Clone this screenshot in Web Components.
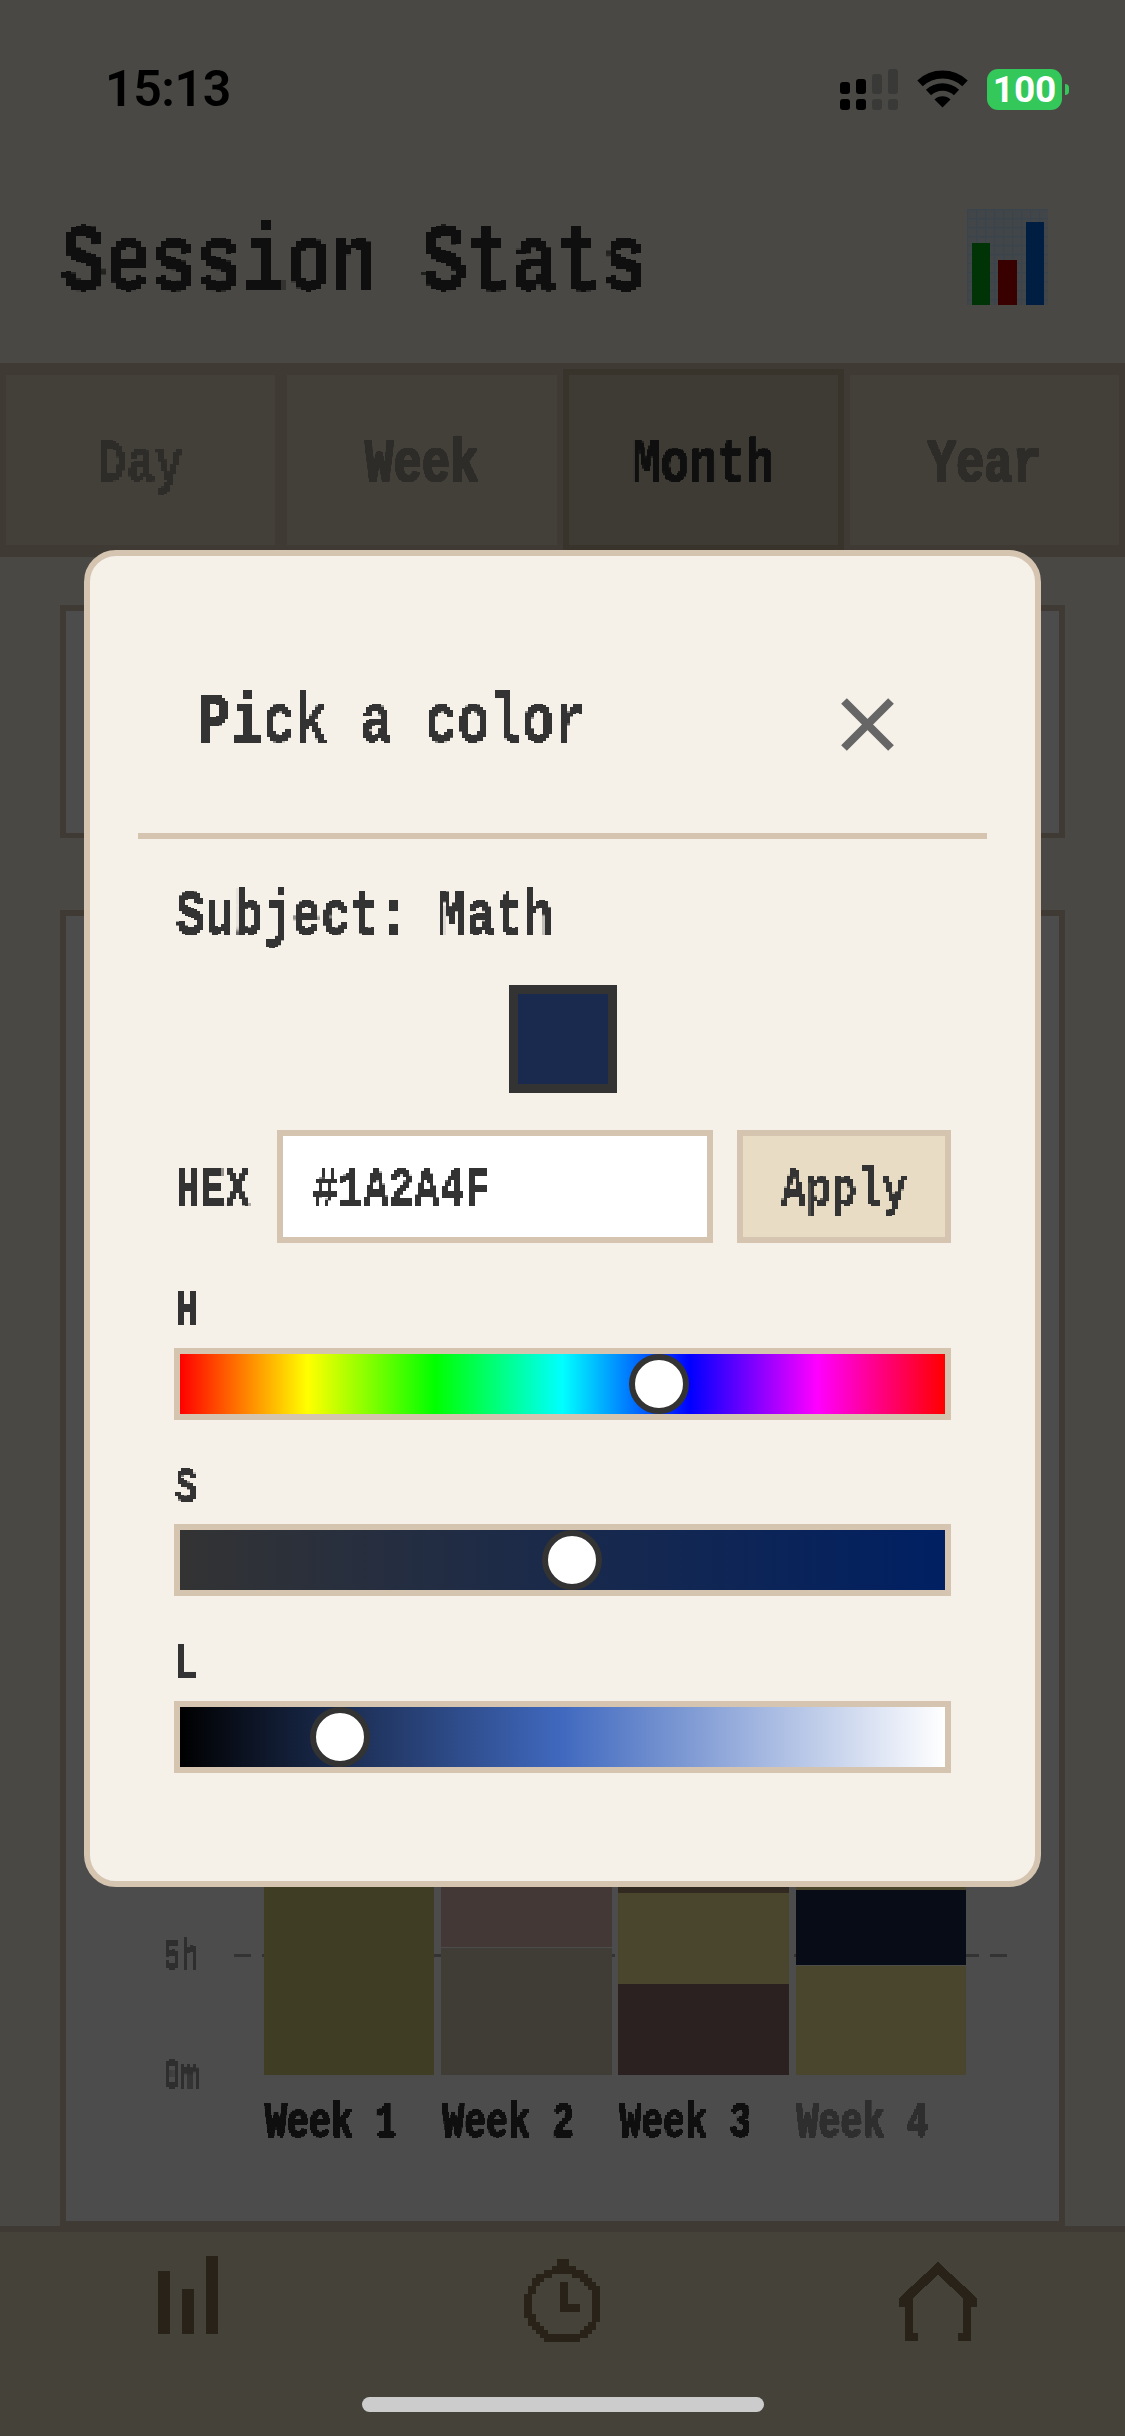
<!DOCTYPE html>
<html lang="en">
<head>
<meta charset="utf-8">
<title>Session Stats</title>
<style>
html,body{margin:0;padding:0;width:1125px;height:2436px;overflow:hidden;background:#F5F0E8}
</style>
</head>
<body>
<app-root>
  <status-bar slot="status"></status-bar>
  <app-header slot="main"><pixel-text adv="45.1" cap="64" style="color:#333">Session Stats</pixel-text></app-header>
  <period-tabs slot="main">
    <tab-item>Day</tab-item><tab-item>Week</tab-item><tab-item active>Month</tab-item><tab-item>Year</tab-item>
  </period-tabs>
  <stats-main slot="main">
    <stat-card style="height:233px"></stat-card>
    <stat-card style="flex:1">
      <stack-chart>
        <chart-bar label="Week 1" segs="230:#D2CB78"></chart-bar>
        <chart-bar label="Week 2" segs="127:#D5C8B4,1:transparent,70:#DFBBB1"></chart-bar>
        <chart-bar label="Week 3" segs="91:#8F716B,91:#F7E696,30:#A78C71"></chart-bar>
        <chart-bar label="Week 4" muted segs="109:#F7E696,1:transparent,75:#1A2A4F,30:#F7E696"></chart-bar>
      </stack-chart>
    </stat-card>
  </stats-main>
  <bottom-nav slot="main"></bottom-nav>
  <color-modal slot="overlay">
    <hsl-slider name="H" pos="449" track="linear-gradient(90deg,#f00,#ff0,#0f0,#0ff,#00f,#f0f,#f00)"></hsl-slider>
    <hsl-slider name="S" pos="362" track="linear-gradient(90deg,#333,#002063)"></hsl-slider>
    <hsl-slider name="L" pos="130" track="linear-gradient(90deg,#000,#4069bf 50%,#fff)"></hsl-slider>
  </color-modal>
  <home-indicator slot="status"></home-indicator>
</app-root>
<script>
function def(name, css, html, setup){
  customElements.define(name, class extends HTMLElement{
    constructor(){
      super();
      const r=this.attachShadow({mode:'open'});
      r.innerHTML='<style>'+css+'</style>'+html;
    }
    connectedCallback(){ if(setup) setup(this,this.shadowRoot); }
  });
}
const MONO='"Liberation Mono","DejaVu Sans Mono",monospace';
const odd=(v)=>{let n=Math.round(v);if(n%2===0)n=(v>=n)?n+1:n-1;return Math.max(n,3);};

def('pixel-text',
 `:host{display:inline-block;font-family:${MONO};font-weight:700;white-space:pre;flex:none;transform-origin:0 50%}
  #w{display:block;height:100%}
  svg{position:absolute;width:0;height:0}`,
 `<svg aria-hidden="true"><filter id="px" x="-20%" y="-60%" width="140%" height="220%" color-interpolation-filters="sRGB"><feFlood id="dot" x="0" y="0" width="1" height="1" flood-color="#000"/><feComposite id="cellbox" x="0" y="0" width="3" height="3" operator="over" in2="SourceAlpha"/><feTile result="grid"/><feComposite in="SourceGraphic" in2="grid" operator="in"/><feComponentTransfer><feFuncA type="linear" slope="4" intercept="-2"/></feComponentTransfer><feMorphology id="grow" operator="dilate" radius="1 1"/></filter></svg><span id="w"><slot></slot></span>`,
 (h,r)=>{
   const adv=+h.getAttribute('adv'),cap=+h.getAttribute('cap');
   const f=adv/0.6,k=cap/(0.66*f);
   h.style.fontSize=f+'px';
   h.style.height=cap+'px';
   h.style.lineHeight=cap+'px';
   h.style.transform=`scaleY(${k}) translateY(${0.0635*f}px)`;
   const cw=odd(cap/14),ch=odd(cap/14/k);
   const c=r.querySelector('#cellbox');
   c.setAttribute('width',cw);c.setAttribute('height',ch);
   const d=r.querySelector('#dot');
   d.setAttribute('x',(cw-1)/2);d.setAttribute('y',(ch-1)/2);
   r.querySelector('#grow').setAttribute('radius',((cw-1)/2)+' '+((ch-1)/2));
   r.querySelector('#w').style.filter='url(#px)';
 });

def('app-root',
 `:host{display:block;position:relative;width:1125px;height:2436px;overflow:hidden;background:#F5F0E8}
  .col{display:flex;flex-direction:column;height:100%}
  .status{position:absolute;inset:0 0 auto 0;z-index:3;height:0}
  .scrim{position:absolute;inset:0;z-index:2;background:rgba(0,0,0,.7);display:flex;justify-content:flex-start;align-items:flex-start;padding:550px 0 0 84px;box-sizing:border-box}`,
 `<div class="col"><div style="height:150px;flex:none"></div><slot name="main"></slot></div>
  <div class="scrim"><slot name="overlay"></slot></div>
  <div class="status"><slot name="status"></slot></div>`);

def('status-bar',
 `:host{display:flex;align-items:center;justify-content:space-between;height:150px;box-sizing:border-box;padding:28px 56px 0 105px;color:#000}
  .time{font:600 50px/1 Roboto,sans-serif;letter-spacing:-.4px}
  .right{display:flex;align-items:center;gap:19px}
  .batt{display:flex;align-items:center;gap:3px}
  .cell{width:75px;height:41px;border-radius:11px;background:#34C759;color:#fff;font:700 37px/41px Roboto,sans-serif;text-align:center}
  .nub{width:4px;height:11px;background:#34C759;border-radius:0 5px 5px 0}
  svg{display:block}`,
 `<div class="time">15:13</div>
  <div class="right">
   <svg width="58" height="41" viewBox="0 0 58 41">
    <g fill="#000"><rect x="0" y="13" width="10" height="12" rx="3"/><rect x="0" y="30" width="10" height="11" rx="3"/>
    <rect x="16" y="10" width="10" height="15" rx="3"/><rect x="16" y="30" width="10" height="11" rx="3"/></g>
    <g fill="#393937"><rect x="32" y="5" width="10" height="20" rx="3"/><rect x="32" y="30" width="10" height="11" rx="3"/>
    <rect x="48" y="0" width="10" height="25" rx="3"/><rect x="48" y="30" width="10" height="11" rx="3"/></g>
   </svg>
   <svg width="51" height="38" viewBox="0 0 51 38" fill="none" stroke="#000">
    <path d="M3 13.4A33 33 0 0 1 48 13.4" stroke-width="8"/>
    <path d="M11.5 22.5A20.5 20.5 0 0 1 39.5 22.5" stroke-width="7.5"/>
    <path d="M25.5 37.5L17.5 29.5A11.5 11.5 0 0 1 33.5 29.5Z" fill="#000" stroke="none"/>
   </svg>
   <div class="batt"><div class="cell">100</div><div class="nub"></div></div>
  </div>`);

def('app-header',
 `:host{display:flex;align-items:center;justify-content:space-between;height:213px;flex:none;box-sizing:border-box;padding:0 77px 0 61px}
  ::slotted(pixel-text){margin-top:3px}
  svg{display:block}`,
 `<slot></slot>
  <svg width="81" height="96" viewBox="0 0 81 96">
   <defs><pattern id="g" width="9" height="9" patternUnits="userSpaceOnUse"><rect width="9" height="9" fill="#DFE9F0"/><path d="M0 .5H9M.5 0V9" stroke="#C1E3FF" stroke-width="1.5"/></pattern></defs>
   <rect width="81" height="96" fill="url(#g)"/>
   <rect x="5" y="34" width="18" height="62" fill="#00AA14"/>
   <rect x="31" y="51" width="19" height="45" fill="#C00000"/>
   <rect x="59" y="13" width="18" height="83" fill="#0066DD"/>
  </svg>`);

def('period-tabs',
 `:host{display:flex;height:194px;flex:none;box-sizing:border-box;border-block:6px solid #D4C4B0;background:#D4C4B0}`,
 `<slot></slot>`);

def('tab-item',
 `:host{flex:1 1 0;display:flex;align-items:center;justify-content:center;box-sizing:border-box;border:6px solid #D4C4B0;background:#E2D4BE;color:#979488;padding-top:4px}
  :host([active]){background:#CFC2AF;border-color:#BBAC8F;color:#333}`,
 `<pixel-text adv="28.4" cap="40"><slot></slot></pixel-text>`);

def('stats-main',
 `:host{flex:1;min-height:0;display:flex;flex-direction:column;gap:72px;padding:48px 60px 0}`,
 `<slot></slot>`);

def('stat-card',
 `:host{display:flex;flex-direction:column;justify-content:flex-end;box-sizing:border-box;border:6px solid #D4C4B0;border-bottom-width:5px;background:#fff;min-height:0}`,
 `<slot></slot>`);

def('stack-chart',
 `:host{display:block;padding-bottom:84px}
  .plot{position:relative;display:flex;align-items:stretch}
  .axis{width:198px;flex:none;box-sizing:border-box;padding-left:97px;display:flex;flex-direction:column;justify-content:flex-end;color:#999}
  .t5{margin-bottom:91.5px}.t0{margin-bottom:-14px}
  .grid{position:absolute;left:168px;right:51px;bottom:118px;height:3px;background:repeating-linear-gradient(90deg,#aaa 0 17px,transparent 17px 28px)}
  .bars{position:relative;width:702px;display:flex;gap:6.75px;align-items:flex-end}
  .labels{margin:29px 0 0 199px;width:702px;display:flex;gap:6.75px}`,
 `<div class="plot">
    <div class="axis"><pixel-text class="t5" adv="18" cap="27.5">5h</pixel-text><pixel-text class="t0" adv="18" cap="27.5">0m</pixel-text></div>
    <div class="grid"></div>
    <div class="bars"><slot></slot></div>
  </div>
  <div class="labels"></div>`,
 (h,r)=>{
   const box=r.querySelector('.labels');
   if(box.children.length)return;
   h.querySelectorAll('chart-bar').forEach(b=>{
     const d=document.createElement('div');
     d.style.cssText='flex:1 1 0;color:'+(b.hasAttribute('muted')?'#999':'#333');
     const t=document.createElement('pixel-text');
     t.setAttribute('adv','22');t.setAttribute('cap','33');
     t.textContent=b.getAttribute('label');
     d.appendChild(t);box.appendChild(d);
   });
 });

def('chart-bar',
 `:host{flex:1 1 0;display:flex;flex-direction:column-reverse}
  i{display:block}`,
 ``,
 (h,r)=>{
   if(r.querySelector('i'))return;
   h.getAttribute('segs').split(',').forEach(s=>{
     const [ht,c]=s.split(':');
     const e=document.createElement('i');
     e.style.height=ht+'px';e.style.background=c;
     r.appendChild(e);
   });
 });

def('bottom-nav',
 `:host{display:flex;height:210px;flex:none;box-sizing:border-box;border-top:6px solid #D4C4B0;background:#E8DCC4;padding-top:24px}
  div{flex:1 1 0;display:flex;justify-content:center}
  svg{display:block}`,
 `<div><svg width="60" height="90" viewBox="0 0 60 90" fill="#8B7355"><rect x="0" y="15" width="12" height="63"/><rect x="24" y="33" width="12" height="45"/><rect x="48" y="0" width="12" height="78"/></svg></div>
  <div><svg id="clock" width="78" height="90" viewBox="0 0 78 90" fill="#8B7355" shape-rendering="crispEdges"></svg></div>
  <div><svg width="78" height="90" viewBox="0 0 78 90" fill="#8B7355" shape-rendering="crispEdges"><path transform="translate(0 6)" d="M39 0L78 36V45H72V79H59V71H64V36L39 13L14 36V71H19V79H6V45H0V36Z"/></svg></div>`,
 (h,r)=>{
   const svg=r.querySelector('#clock');
   if(svg.childElementCount)return;
   let d='';
   const cx=39,cy=49,R=39,c=4;
   for(let y=cy-R;y<cy+R;y+=c)for(let x=cx-R;x<cx+R;x+=c){
     const dd=Math.hypot(x+c/2-cx,y+c/2-cy);
     if(dd<=R&&dd>=R-8)d+=`M${x} ${y}h${c}v${c}h-${c}z`;
   }
   d+='M33 3h12v8h-12zM36 26h8v22h12v8h-20z';
   const p=document.createElementNS('http://www.w3.org/2000/svg','path');
   p.setAttribute('d',d);svg.appendChild(p);
 });

def('home-indicator',
 `:host{position:absolute;left:362px;top:2397px;width:402px;height:15px;border-radius:8px;background:#ccc}`,``);

def('color-modal',
 `:host{display:block;width:957px;height:1337px;box-sizing:border-box;border:6px solid #D4C4B0;border-radius:32px;background:#F5F0E8;color:#333;padding:0 48px}
  .head{display:flex;align-items:center;justify-content:space-between;height:283px;box-sizing:border-box;padding:50px 93px 0 60px;border-bottom:6px solid #D4C4B0}
  .head svg{display:block;margin-top:10px}
  .body{padding:0 36px}
  .subject{display:block;margin:54px 0 0 2px}
  .swatch{width:108px;height:108px;box-sizing:border-box;border:9px solid #333;background:#1A2A4F;margin:51px auto 37px}
  .hex{display:flex;align-items:stretch;height:113px;margin-bottom:50px}
  .hexl{align-self:center;margin:0 27px 0 2px}
  .input{width:437px;box-sizing:border-box;border:6px solid #D4C4B0;background:#fff;display:flex;align-items:center;padding-left:30px;margin-right:24px}
  .btn{width:214px;box-sizing:border-box;border:6px solid #D4C4B0;background:#E8DCC4;display:flex;align-items:center;justify-content:center}
  .sliders{display:flex;flex-direction:column;gap:50px}`,
 `<div class="head"><pixel-text adv="32.4" cap="46">Pick a color</pixel-text>
   <svg width="53" height="53" viewBox="0 0 53 53"><path d="M3 3L50 50M50 3L3 50" stroke="#666" stroke-width="8" fill="none"/></svg></div>
  <div class="body">
   <pixel-text class="subject" adv="29" cap="41">Subject: Math</pixel-text>
   <div class="swatch"></div>
   <div class="hex"><pixel-text class="hexl" adv="24.6" cap="36">HEX</pixel-text>
     <div class="input"><pixel-text adv="25.3" cap="36">#1A2A4F</pixel-text></div>
     <div class="btn"><pixel-text adv="25.3" cap="36">Apply</pixel-text></div></div>
   <div class="sliders"><slot></slot></div>
  </div>`);

def('hsl-slider',
 `:host{display:block}
  .lab{display:block;margin:0 0 22px 1px}
  .track{position:relative;height:72px;box-sizing:border-box;border:6px solid #D4C4B0}
  .fill{height:100%}
  .thumb{position:absolute;top:0;width:60px;height:60px;box-sizing:border-box;border:6px solid #333;border-radius:50%;background:#fff}`,
 `<pixel-text class="lab" adv="22.7" cap="32.5"></pixel-text>
  <div class="track"><div class="fill"></div><div class="thumb"></div></div>`,
 (h,r)=>{
   r.querySelector('.lab').textContent=h.getAttribute('name');
   r.querySelector('.fill').style.background=h.getAttribute('track');
   r.querySelector('.thumb').style.left=h.getAttribute('pos')+'px';
 });
</script>
</body>
</html>
